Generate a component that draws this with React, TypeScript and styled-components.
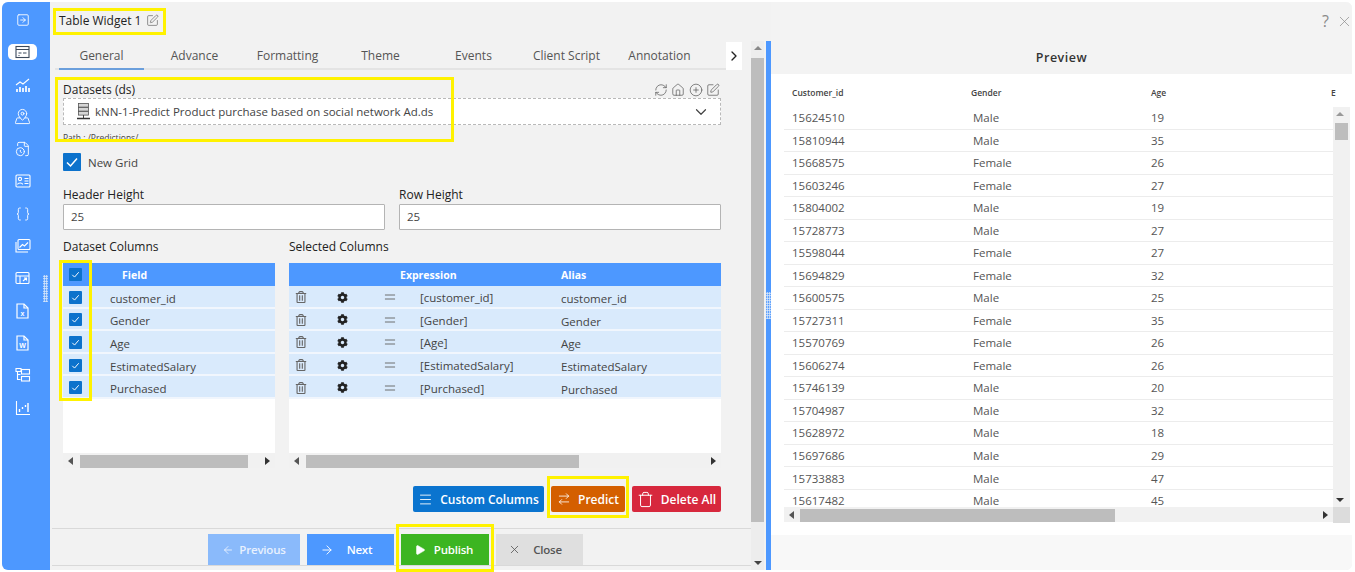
import * as React from "react";
import styled, { createGlobalStyle } from "styled-components";
import {
    ArrowLeft,
    ArrowRight,
    ArrowRightLeft,
    Braces,
    ChevronDown,
    ChevronRight,
    CirclePlus,
    Equal,
    FileClock,
    House,
    MapPinned,
    Menu,
    Play,
    RefreshCw,
    SquareArrowRight,
    SquarePen,
    Trash,
    X,
} from "lucide-react";
import { FaCog, FaRegTrashAlt } from "react-icons/fa";

const GlobalStyle = createGlobalStyle`
    * { box-sizing: border-box; }
    html, body { margin: 0; background: #fff; }
    body {
        font-family: "Open Sans", "Noto Sans", "Liberation Sans", sans-serif;
        font-size: 11.5px;
        color: #333;
    }
`;

const Shell = styled.div`
    position: relative;
    width: 1355px;
    height: 572px;
    padding: 2px;
    overflow: hidden;
`;
const Frame = styled.div`
    display: grid;
    grid-template-columns: 48px 716px 5px minmax(0, 1fr);
    width: 1350px;
    height: 568px;
    border-radius: 6px;
    overflow: hidden;
    background: #f2f2f2;
`;
const Sidebar = styled.nav`
    display: flex;
    flex-direction: column;
    align-items: center;
    padding: 10px 7px 0 0;
    background: #4d98ff;
    color: #fff;
`;
const NavSlot = styled.div<{ $active?: boolean }>`
    display: flex;
    align-items: center;
    justify-content: center;
    flex: none;
    height: 16px;
    width: ${({ $active }) => ($active ? "29px" : "20px")};
    margin-bottom: 16.3px;
    border-radius: 5px;
    background: ${({ $active }) => ($active ? "#fff" : "transparent")};
    color: ${({ $active }) => ($active ? "#3d4a5c" : "#fff")};
`;
const Grip = styled.div<{ $x: number; $y: number; $w: number; $h: number }>`
    position: absolute;
    left: ${({ $x }) => $x}px;
    top: ${({ $y }) => $y}px;
    width: ${({ $w }) => $w}px;
    height: ${({ $h }) => $h}px;
    background-image: radial-gradient(#dfeaf8 1px, transparent 1px);
    background-size: 2.5px 2.5px;
`;
const LeftPane = styled.section`
    display: flex;
`;
const Main = styled.div`
    display: flex;
    flex-direction: column;
    width: 701px;
`;
const TitleRow = styled.header`
    display: flex;
    align-items: center;
    gap: 5px;
    height: 37px;
    padding-left: 9px;
    font-size: 12px;
    color: #222;
`;
const TabStrip = styled.div`
    display: flex;
    align-items: stretch;
    height: 31px;
    margin-left: 5px;
    width: 687px;
    border-bottom: 2px solid #e4e4e4;
`;
const Tab = styled.div<{ $active?: boolean }>`
    position: relative;
    display: flex;
    align-items: center;
    justify-content: center;
    width: 93px;
    padding-top: 3px;
    font-size: 12px;
    color: #555;
    ${({ $active }) =>
        $active &&
        `&::after {
            content: "";
            position: absolute;
            left: 4px;
            right: 4px;
            bottom: -2px;
            height: 2px;
            background: #6b9fdc;
        }`}
`;
const TabMore = styled.div`
    display: flex;
    align-items: center;
    justify-content: center;
    width: 16px;
    margin: 3px 0 -2px 20px;
    background: #fff;
    color: #222;
`;
const Form = styled.div`
    display: flex;
    flex-direction: column;
    flex: 1;
    padding: 11px 30px 0 13px;
`;
const DatasetHead = styled.div`
    display: flex;
    align-items: center;
    justify-content: space-between;
    height: 17px;
`;
const Label = styled.label`
    font-size: 12px;
    color: #222;
`;
const Tools = styled.div`
    display: flex;
    gap: 3.5px;
    padding-right: 1px;
    color: #555;
`;
const DatasetSelect = styled.div`
    display: flex;
    align-items: center;
    gap: 4px;
    height: 27px;
    padding: 0 10px 0 12px;
    background: #fff;
    border: 1px dashed #b9b9b9;
    font-size: 11.5px;
    color: #444;
`;
const SelectText = styled.span`
    flex: 1;
`;
const PathText = styled.div`
    height: 14px;
    margin-top: 7px;
    font-size: 8.5px;
    color: #444;
    overflow: hidden;
`;
const CheckRow = styled.div`
    display: flex;
    align-items: center;
    gap: 7px;
    margin-top: 7px;
    height: 18px;
    font-size: 11.5px;
    color: #444;
`;
const Check = styled.span<{ $size: number }>`
    display: inline-flex;
    align-items: center;
    justify-content: center;
    width: ${({ $size }) => $size}px;
    height: ${({ $size }) => $size}px;
    background: #0c72cc;
    border-radius: 1px;
    color: #fff;
`;
const HeightRow = styled.div`
    display: grid;
    grid-template-columns: 322px 322px;
    column-gap: 14px;
    margin-top: 15px;
`;
const FieldLabel = styled(Label)`
    display: block;
    height: 18px;
    line-height: 18px;
`;
const TextBox = styled.div`
    height: 26px;
    padding: 0 7px;
    line-height: 24px;
    background: #fff;
    border: 1px solid #b4b4b4;
    border-radius: 1px;
    font-size: 11.5px;
    color: #444;
`;
const Columns = styled.div`
    display: grid;
    grid-template-columns: 212px 432px;
    column-gap: 14px;
    margin-top: 9px;
`;
const ColumnHead = styled(Label)`
    display: block;
    height: 24px;
    line-height: 16px;
`;
const TableBox = styled.div`
    display: flex;
    flex-direction: column;
    height: 205px;
    background: #fff;
`;
const BlueHead = styled.div`
    display: flex;
    align-items: center;
    flex: none;
    height: 23px;
    background: #4d98ff;
    color: #fff;
    font-weight: 700;
    font-size: 10.5px;
`;
const BlueRow = styled.div`
    display: flex;
    align-items: center;
    flex: none;
    height: 22.6px;
    padding-top: 2px;
    background: #d9eafc;
    border-bottom: 2px solid #f1f6fd;
    font-size: 11.5px;
    color: #444;
`;
const CheckCell = styled.div`
    display: flex;
    align-items: center;
    justify-content: center;
    width: 24px;
    flex: none;
`;
const FieldHead = styled.span`
    margin-left: 35px;
`;
const FieldCell = styled.span`
    margin: 2px 0 0 23px;
`;
const IconCell = styled.div<{ $w: number }>`
    display: flex;
    align-items: center;
    justify-content: center;
    width: ${({ $w }) => $w}px;
    flex: none;
    color: #444;
`;
const ExprHead = styled.span`
    width: 161px;
    margin-left: 111px;
`;
const ExprCell = styled.span`
    width: 141px;
    flex: none;
    margin-top: 1px;
`;
const AliasCell = styled.span`
    margin-top: 3px;
`;
const Spacer = styled.div`
    flex: 1;
`;
const HScroll = styled.div<{ $thumbLeft: number; $thumbWidth: number }>`
    position: relative;
    flex: none;
    height: 15px;
    background: #f1f1f1;
    &::before {
        content: "";
        position: absolute;
        left: ${({ $thumbLeft }) => $thumbLeft}px;
        width: ${({ $thumbWidth }) => $thumbWidth}px;
        top: 2px;
        height: 13px;
        background: #bdbdbd;
    }
`;
const Triangle = styled.span<{ $dir: "left" | "right" | "up" | "down"; $color?: string }>`
    position: absolute;
    width: 0;
    height: 0;
    ${({ $dir, $color }) => {
        const c = $color || "#555";
        if ($dir === "left") return `left: 5px; top: 4px; border: 4px solid transparent; border-left: 0; border-right: 5px solid ${c};`;
        if ($dir === "right") return `right: 5px; top: 4px; border: 4px solid transparent; border-right: 0; border-left: 5px solid ${c};`;
        if ($dir === "up") return `left: 3px; top: 5px; border: 4px solid transparent; border-top: 0; border-bottom: 4px solid ${c};`;
        return `left: 3px; bottom: 5px; border: 4px solid transparent; border-bottom: 0; border-top: 4px solid ${c};`;
    }}
`;
const ActionRow = styled.div`
    display: flex;
    justify-content: flex-end;
    gap: 7px;
    margin-top: 18px;
    height: 26px;
`;
const ActionButton = styled.button<{ $bg: string; $w: number }>`
    display: flex;
    align-items: center;
    justify-content: center;
    gap: 7px;
    width: ${({ $w }) => $w}px;
    border: 0;
    border-radius: 2px;
    padding: 0;
    background: ${({ $bg }) => $bg};
    color: #fff;
    font-family: inherit;
    font-size: 12px;
    font-weight: 600;
`;
const Footer = styled.footer`
    display: flex;
    gap: 7px;
    flex: none;
    height: 38px;
    margin: 0 0 4px 2px;
    padding: 5px 0 0 156px;
    border-top: 1px solid #d9d9d9;
    border-bottom: 1px solid #d9d9d9;
`;
const WizardButton = styled.button<{ $bg: string; $fg?: string; $w: number; $gap?: number; $shift?: number }>`
    display: flex;
    align-items: center;
    justify-content: center;
    gap: ${({ $gap }) => $gap ?? 8}px;
    width: ${({ $w }) => $w}px;
    height: 31px;
    border: 0;
    padding: 0 ${({ $shift }) => $shift ?? 0}px 0 0;
    background: ${({ $bg }) => $bg};
    color: ${({ $fg }) => $fg || "#fff"};
    font-family: inherit;
    font-size: 11.5px;
    font-weight: 600;
    letter-spacing: -0.2px;
`;
const MainScroll = styled.div`
    position: relative;
    width: 13px;
    margin-top: 39px;
    background: #ededed;
    &::before {
        content: "";
        position: absolute;
        top: 17px;
        bottom: 48px;
        left: 0;
        right: 0;
        background: #bdbdbd;
    }
`;
const Splitter = styled.div`
    margin-top: 39px;
    background: #4d98ff;
`;
const RightPane = styled.section`
    display: flex;
    flex-direction: column;
    min-width: 0;
    background: #f8f8f8;
`;
const PreviewTop = styled.div`
    position: relative;
    flex: none;
    height: 72px;
    background: #f3f3f3;
`;
const PreviewTitle = styled.h2`
    position: absolute;
    left: 0;
    right: 0;
    top: 47px;
    margin: 0;
    text-align: center;
    font-size: 12.5px;
    font-weight: 600;
    letter-spacing: 0.5px;
    color: #333;
`;
const WindowTools = styled.div`
    position: absolute;
    top: 8px;
    right: -1px;
    display: flex;
    align-items: center;
    gap: 7px;
    font-size: 16px;
    color: #8a8a8a;
`;
const PreviewBody = styled.div`
    flex: none;
    height: 461px;
    padding-left: 13px;
    background: #fff;
`;
const Grid = styled.div`
    display: grid;
    grid-template-columns: 1fr 17px;
    grid-template-rows: 33px 400px 16px;
    width: 566px;
`;
const GridHead = styled.div`
    grid-column: 1 / 3;
    display: flex;
    align-items: center;
    overflow: hidden;
    padding: 3px 0 0 8px;
    font-size: 8.5px;
    font-weight: 600;
    color: #444;
`;
const GridHeadCell = styled.span<{ $w: number }>`
    flex: none;
    width: ${({ $w }) => $w}px;
`;
const GridRows = styled.div`
    overflow: hidden;
`;
const GridRow = styled.div`
    display: flex;
    align-items: center;
    height: 22.52px;
    padding-left: 8px;
    border-bottom: 1px solid #ececec;
    font-size: 11.5px;
    color: #555;
`;
const GridCell = styled.span<{ $w: number; $pad?: number }>`
    flex: none;
    width: ${({ $w }) => $w}px;
    padding-left: ${({ $pad }) => $pad || 0}px;
`;
const VScroll = styled.div`
    position: relative;
    background: #f1f1f1;
    &::before {
        content: "";
        position: absolute;
        left: 2px;
        right: 2px;
        top: 16px;
        height: 17px;
        background: #bdbdbd;
    }
`;
const Corner = styled.div`
    background: #dcdcdc;
`;
const Highlight = styled.div<{ $x: number; $y: number; $w: number; $h: number }>`
    position: absolute;
    left: ${({ $x }) => $x}px;
    top: ${({ $y }) => $y}px;
    width: ${({ $w }) => $w}px;
    height: ${({ $h }) => $h}px;
    border: 3px solid #fff200;
    pointer-events: none;
`;

const Glyph = ({ children, w = 16, h = 16 }: { children: React.ReactNode; w?: number; h?: number }) => (
    <svg width={w} height={h} viewBox={`0 0 ${w} ${h}`} fill="none" stroke="currentColor" strokeWidth="1.1">
        {children}
    </svg>
);

const FileLetter = ({ letter }: { letter: string }) => (
    <svg width="13" height="16" viewBox="0 0 13 16" fill="none" stroke="#fff" strokeWidth="1.2">
        <path d="M1 1h7l4 4v10H1z" />
        <path d="M8 1v4h4" />
        <text x="6.5" y="13" textAnchor="middle" fontSize="7" fontWeight="700" fill="#fff" stroke="none" fontFamily="Liberation Sans">
            {letter}
        </text>
    </svg>
);

const ServerIcon = () => (
    <svg width="15" height="18" viewBox="0 0 15 18" fill="none">
        <rect x="2.5" y="0.5" width="10" height="3.6" fill="#d6d6d6" stroke="#555" strokeWidth="0.8" />
        <rect x="2.5" y="4.5" width="10" height="3.6" fill="#d6d6d6" stroke="#555" strokeWidth="0.8" />
        <rect x="2.5" y="8.5" width="10" height="3.6" fill="#d6d6d6" stroke="#555" strokeWidth="0.8" />
        <path d="M7.5 12v3" stroke="#444" />
        <path d="M1 15.5h13" stroke="#333" strokeWidth="1.5" />
    </svg>
);

const nav = [
    <SquareArrowRight size={14} strokeWidth={1.5} />,
    <Glyph w={15} h={14}>
        <rect x="1" y="1.5" width="13" height="11" />
        <path d="M1 4.5h13M3.5 8h3M3.5 10.5h1M8 8h3.5" />
    </Glyph>,
    <Glyph>
        <path d="M1 8l4-3 3 2 6-5" />
        <path d="M2 15v-3M5 15v-5M8 15v-4M11 15v-6M14 15v-4" strokeWidth="1.7" />
    </Glyph>,
    <MapPinned size={17} strokeWidth={1.3} />,
    <FileClock size={16} strokeWidth={1.4} />,
    <Glyph w={16} h={14}>
        <rect x="1" y="1" width="14" height="12" rx="1" />
        <circle cx="5" cy="5" r="1.6" />
        <path d="M2.5 10.5c.4-2 5-2 5.2 0M9.5 4.5h4M9.5 7h4M9.5 9.5h4" />
    </Glyph>,
    <Braces size={16} strokeWidth={1.4} />,
    <Glyph>
        <rect x="3" y="1.5" width="12" height="10" rx="1" />
        <path d="M1 4v10h12" />
        <path d="M4.5 9.5l3-3 2 1.5 3.5-3.5" />
    </Glyph>,
    <Glyph w={15} h={14}>
        <rect x="1" y="1.5" width="13" height="11" rx="1" />
        <path d="M1 5h13M5 5v7.5M8 10l3.5-3M9 7h2.5v2.5" />
    </Glyph>,
    <FileLetter letter="x" />,
    <FileLetter letter="W" />,
    <Glyph>
        <path d="M1 1.5h5v3H1zM2.5 4.5v8h3" />
        <path d="M2.5 7.5h3" />
        <rect x="6.5" y="2.5" width="8" height="4.5" />
        <rect x="6.5" y="9.5" width="8" height="4.5" />
    </Glyph>,
    <Glyph>
        <path d="M1.5 1v13.5H15" />
        <path d="M4.5 12V9M7.5 9V7M10.5 7V5M13 12V3" strokeWidth="1.4" />
    </Glyph>,
];
const tabs = ["General", "Advance", "Formatting", "Theme", "Events", "Client Script", "Annotation"];
const fields = ["customer_id", "Gender", "Age", "EstimatedSalary", "Purchased"];
const customers: [string, string, number][] = [
    ["15624510", "Male", 19],
    ["15810944", "Male", 35],
    ["15668575", "Female", 26],
    ["15603246", "Female", 27],
    ["15804002", "Male", 19],
    ["15728773", "Male", 27],
    ["15598044", "Female", 27],
    ["15694829", "Female", 32],
    ["15600575", "Male", 25],
    ["15727311", "Female", 35],
    ["15570769", "Female", 26],
    ["15606274", "Female", 26],
    ["15746139", "Male", 20],
    ["15704987", "Male", 32],
    ["15628972", "Male", 18],
    ["15697686", "Male", 29],
    ["15733883", "Male", 47],
    ["15617482", "Male", 45],
];

const CheckMark = ({ size }: { size: number }) => (
    <Check $size={size}>
        <svg width={size - 4} height={size - 4} viewBox="0 0 14 14" fill="none" stroke="#fff" strokeWidth="1.5">
            <path d="M2 7.5l3.5 3.5L12 3.5" />
        </svg>
    </Check>
);

const App = () => (
    <Shell>
        <GlobalStyle />
        <Frame>
            <Sidebar>
                {nav.map((icon, i) => (
                    <NavSlot key={i} $active={i === 1}>
                        {icon}
                    </NavSlot>
                ))}
            </Sidebar>
            <LeftPane>
                <Main>
                    <TitleRow>
                        Table Widget 1
                        <SquarePen size={13} strokeWidth={1.3} color="#666" />
                    </TitleRow>
                    <TabStrip>
                        {tabs.map((t, i) => (
                            <Tab key={t} $active={i === 0}>
                                {t}
                            </Tab>
                        ))}
                        <TabMore>
                            <ChevronRight size={18} strokeWidth={2} />
                        </TabMore>
                    </TabStrip>
                    <Form>
                        <DatasetHead>
                            <Label>Datasets (ds)</Label>
                            <Tools>
                                <RefreshCw size={14} strokeWidth={1.2} />
                                <House size={14} strokeWidth={1.2} />
                                <CirclePlus size={14} strokeWidth={1.2} />
                                <SquarePen size={14} strokeWidth={1.2} />
                            </Tools>
                        </DatasetHead>
                        <DatasetSelect>
                            <ServerIcon />
                            <SelectText>kNN-1-Predict Product purchase based on social network Ad.ds</SelectText>
                            <ChevronDown size={18} strokeWidth={1.6} color="#444" />
                        </DatasetSelect>
                        <PathText>Path : /Predictions/</PathText>
                        <CheckRow>
                            <CheckMark size={18} />
                            New Grid
                        </CheckRow>
                        <HeightRow>
                            <div>
                                <FieldLabel>Header Height</FieldLabel>
                                <TextBox>25</TextBox>
                            </div>
                            <div>
                                <FieldLabel>Row Height</FieldLabel>
                                <TextBox>25</TextBox>
                            </div>
                        </HeightRow>
                        <Columns>
                            <div>
                                <ColumnHead>Dataset Columns</ColumnHead>
                                <TableBox>
                                    <BlueHead>
                                        <CheckCell>
                                            <CheckMark size={13} />
                                        </CheckCell>
                                        <FieldHead>Field</FieldHead>
                                    </BlueHead>
                                    {fields.map((f) => (
                                        <BlueRow key={f}>
                                            <CheckCell>
                                                <CheckMark size={13} />
                                            </CheckCell>
                                            <FieldCell>{f}</FieldCell>
                                        </BlueRow>
                                    ))}
                                    <Spacer />
                                    <HScroll $thumbLeft={17} $thumbWidth={168}>
                                        <Triangle $dir="left" />
                                        <Triangle $dir="right" $color="#333" />
                                    </HScroll>
                                </TableBox>
                            </div>
                            <div>
                                <ColumnHead>Selected Columns</ColumnHead>
                                <TableBox>
                                    <BlueHead>
                                        <ExprHead>Expression</ExprHead>
                                        <span>Alias</span>
                                    </BlueHead>
                                    {fields.map((f) => (
                                        <BlueRow key={f}>
                                            <IconCell $w={24}>
                                                <FaRegTrashAlt size={12} color="#666" />
                                            </IconCell>
                                            <IconCell $w={58}>
                                                <FaCog size={11} color="#222" />
                                            </IconCell>
                                            <IconCell $w={37}>
                                                <Equal size={16} strokeWidth={1.4} color="#666" />
                                            </IconCell>
                                            <IconCell $w={12} />
                                            <ExprCell>[{f}]</ExprCell>
                                            <AliasCell>{f}</AliasCell>
                                        </BlueRow>
                                    ))}
                                    <Spacer />
                                    <HScroll $thumbLeft={17} $thumbWidth={273}>
                                        <Triangle $dir="left" />
                                        <Triangle $dir="right" $color="#333" />
                                    </HScroll>
                                </TableBox>
                            </div>
                        </Columns>
                        <ActionRow>
                            <ActionButton $bg="#0a74cf" $w={131}>
                                <Menu size={15} strokeWidth={1.4} />
                                Custom Columns
                            </ActionButton>
                            <ActionButton $bg="#d45f00" $w={74}>
                                <ArrowRightLeft size={14} strokeWidth={1.4} />
                                Predict
                            </ActionButton>
                            <ActionButton $bg="#d7283d" $w={89}>
                                <Trash size={17} strokeWidth={1.4} />
                                Delete All
                            </ActionButton>
                        </ActionRow>
                    </Form>
                    <Footer>
                        <WizardButton $bg="#8abafb" $fg="#e8f1fe" $w={92} $gap={5}>
                            <ArrowLeft size={12} strokeWidth={1.8} />
                            Previous
                        </WizardButton>
                        <WizardButton $bg="#4d98ff" $w={87} $gap={13} $shift={9}>
                            <ArrowRight size={14} strokeWidth={1.6} />
                            Next
                        </WizardButton>
                        <WizardButton $bg="#3cb521" $w={88} $shift={3}>
                            <Play size={12} fill="#fff" strokeWidth={1} />
                            Publish
                        </WizardButton>
                        <WizardButton $bg="#dfdfdf" $fg="#555" $w={87} $gap={12} $shift={9}>
                            <X size={13} strokeWidth={1.5} />
                            Close
                        </WizardButton>
                    </Footer>
                </Main>
                <MainScroll>
                    <Triangle $dir="up" $color="#888" />
                    <Triangle $dir="down" $color="#444" />
                </MainScroll>
            </LeftPane>
            <Splitter />
            <RightPane>
                <PreviewTop>
                    <PreviewTitle>Preview</PreviewTitle>
                    <WindowTools>
                        ?
                        <X size={17} strokeWidth={1} />
                    </WindowTools>
                </PreviewTop>
                <PreviewBody>
                    <Grid>
                        <GridHead>
                            <GridHeadCell $w={179}>Customer_id</GridHeadCell>
                            <GridHeadCell $w={180}>Gender</GridHeadCell>
                            <GridHeadCell $w={180}>Age</GridHeadCell>
                            <GridHeadCell $w={10}>E</GridHeadCell>
                        </GridHead>
                        <GridRows>
                            {customers.map(([id, gender, age]) => (
                                <GridRow key={id}>
                                    <GridCell $w={179}>{id}</GridCell>
                                    <GridCell $w={180} $pad={2}>{gender}</GridCell>
                                    <GridCell $w={120}>{age}</GridCell>
                                </GridRow>
                            ))}
                        </GridRows>
                        <VScroll>
                            <Triangle $dir="up" $color="#999" />
                            <Triangle $dir="down" $color="#333" />
                        </VScroll>
                        <HScroll $thumbLeft={16} $thumbWidth={315}>
                            <Triangle $dir="left" />
                            <Triangle $dir="right" $color="#333" />
                        </HScroll>
                        <Corner />
                    </Grid>
                </PreviewBody>
            </RightPane>
        </Frame>
        <Grip $x={43} $y={275} $w={5} $h={27} />
        <Grip $x={766} $y={292} $w={5} $h={27} />
        <Highlight $x={53} $y={8} $w={113} $h={27} />
        <Highlight $x={55} $y={77} $w={399} $h={65} />
        <Highlight $x={59} $y={260} $w={33} $h={141} />
        <Highlight $x={547} $y={476} $w={82} $h={42} />
        <Highlight $x={396} $y={524} $w={98} $h={48} />
    </Shell>
);

export default App;
